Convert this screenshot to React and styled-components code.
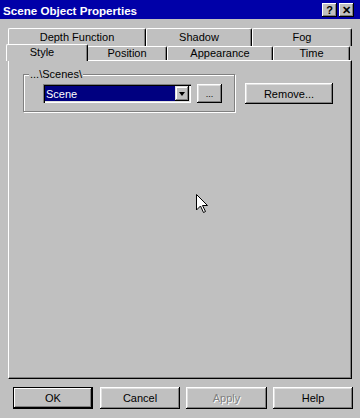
import React from 'react';
import styled, { createGlobalStyle } from 'styled-components';

const GlobalStyle = createGlobalStyle`
  html, body {
    margin: 0;
    padding: 0;
    background: #c0c0c0;
  }
  * {
    box-sizing: border-box;
  }
`;

const Window = styled.div`
  position: relative;
  width: 360px;
  height: 418px;
  background: #c0c0c0;
  font-family: "Liberation Sans", Arial, sans-serif;
  font-size: 11px;
  color: #000;
  display: flex;
  flex-direction: column;
  overflow: hidden;
`;

const TitleBar = styled.div`
  height: 19px;
  background: #0000a8;
  display: flex;
  align-items: center;
  padding: 0 6px 0 3px;
`;

const Title = styled.div`
  flex: 1;
  color: #fff;
  font-weight: bold;
  font-size: 11.6px;
  padding-top: 1px;
`;

const TitleButton = styled.div`
  width: 15px;
  height: 14px;
  margin-left: 2px;
  margin-top: 1px;
  background: #c0c0c0;
  box-shadow: inset -1px -1px #000, inset 1px 1px #fff, inset -2px -2px #808080;
  display: flex;
  align-items: center;
  justify-content: center;
  font-weight: bold;
  font-size: 11px;
  line-height: 1;
`;

const TabArea = styled.div`
  margin: 9px 8px 0 8px;
  display: flex;
  flex-direction: column;
`;

const TabRow = styled.div`
  display: flex;
  height: ${p => p.h}px;
  align-items: flex-end;
`;

const Tab = styled.div`
  position: relative;
  width: ${p => p.w}px;
  height: ${p => p.h}px;
  background: #c0c0c0;
  border-top: 1px solid #fff;
  border-left: 1px solid #fff;
  border-right: 1px solid #000;
  border-top-left-radius: 2px;
  border-top-right-radius: 2px;
  box-shadow: inset -1px 0 #808080;
  display: flex;
  align-items: center;
  justify-content: center;
  padding-bottom: 1px;
`;

const ActiveTab = styled(Tab)`
  width: ${p => p.w + 2}px;
  height: ${p => p.h + 3}px;
  margin-left: -2px;
  margin-right: -1px;
  margin-bottom: -1px;
  z-index: 1;
  padding: 0 10px 2px 0;
`;

const Panel = styled.div`
  position: relative;
  height: 319px;
  margin: 0 8px;
  background: #c0c0c0;
  border-top: 1px solid #fff;
  border-left: 1px solid #fff;
  border-right: 1px solid #000;
  border-bottom: 1px solid #000;
  box-shadow: inset -1px -1px #808080;
  display: flex;
  align-items: flex-start;
  padding: 13px 0 0 14px;
`;

const GroupBox = styled.div`
  position: relative;
  width: 212px;
  height: 38px;
  border: 1px solid #808080;
  box-shadow: inset 1px 1px #fff, 1px 1px #fff;
  display: flex;
  align-items: flex-start;
  padding: 9px 0 0 19px;
`;

const GroupLabel = styled.span`
  position: absolute;
  top: -7px;
  left: 5px;
  padding: 0 1px;
  background: #c0c0c0;
`;

const Combo = styled.div`
  width: 148px;
  height: 19px;
  background: #fff;
  box-shadow: inset 1px 1px #808080, inset 2px 2px #000, inset -1px -1px #fff, inset -2px -2px #dfdfdf;
  display: flex;
  padding: 2px;
`;

const ComboValue = styled.div`
  flex: 1;
  background: #000080;
  color: #fff;
  padding-left: 1px;
  display: flex;
  align-items: center;
`;

const ComboArrow = styled.div`
  width: 14px;
  height: 15px;
  background: #c0c0c0;
  box-shadow: inset -1px -1px #000, inset 1px 1px #dfdfdf, inset -2px -2px #808080, inset 2px 2px #fff;
  display: flex;
  align-items: center;
  justify-content: center;
`;

const Triangle = styled.div`
  width: 0;
  height: 0;
  border-left: 3px solid transparent;
  border-right: 3px solid transparent;
  border-top: 4px solid #000;
`;

const Button = styled.div`
  width: ${p => p.w}px;
  height: ${p => p.h}px;
  margin-left: ${p => p.ml || 0}px;
  margin-top: ${p => p.mt || 0}px;
  background: #c0c0c0;
  box-shadow: ${p => p.isDefault
    ? 'inset 0 0 0 1px #000, inset -2px -2px #000, inset 2px 2px #fff, inset -3px -3px #808080'
    : 'inset -1px -1px #000, inset 1px 1px #fff, inset -2px -2px #808080, inset 2px 2px #dfdfdf'};
  display: flex;
  align-items: center;
  justify-content: center;
  color: ${p => (p.disabled ? '#808080' : '#000')};
  text-shadow: ${p => (p.disabled ? '1px 1px #fff' : 'none')};
  font-size: ${p => p.fs || 11}px;
`;

const ButtonRow = styled.div`
  display: flex;
  margin: 8px 0 0 13px;
`;

const Cursor = styled.svg`
  position: absolute;
  left: 196px;
  top: 194px;
`;

export default function App() {
  return (
    <Window>
      <GlobalStyle />
      <TitleBar>
        <Title>Scene Object Properties</Title>
        <TitleButton>?</TitleButton>
        <TitleButton>✕</TitleButton>
      </TitleBar>

      <TabArea>
        <TabRow h={18}>
          <Tab w={138} h={18}>Depth Function</Tab>
          <Tab w={106} h={18}>Shadow</Tab>
          <Tab w={100} h={18}>Fog</Tab>
        </TabRow>
        <TabRow h={14}>
          <ActiveTab w={80} h={14}>Style</ActiveTab>
          <Tab w={80} h={14}>Position</Tab>
          <Tab w={106} h={14}>Appearance</Tab>
          <Tab w={77} h={14}>Time</Tab>
        </TabRow>
      </TabArea>

      <Panel>
        <GroupBox>
          <GroupLabel>...\Scenes\</GroupLabel>
          <Combo>
            <ComboValue>Scene</ComboValue>
            <ComboArrow><Triangle /></ComboArrow>
          </Combo>
          <Button w={25} h={19} ml={6} fs={9}>...</Button>
        </GroupBox>
        <Button w={88} h={21} ml={10} mt={9}>Remove...</Button>
      </Panel>

      <ButtonRow>
        <Button w={80} h={22} isDefault>OK</Button>
        <Button w={80} h={22} ml={7}>Cancel</Button>
        <Button w={81} h={22} ml={6} disabled>Apply</Button>
        <Button w={80} h={22} ml={6}>Help</Button>
      </ButtonRow>

      <Cursor width="13" height="20" viewBox="0 0 13 20">
        <polygon points="0.5,0.5 0.5,16 4.5,12 7.5,18.5 9.5,17.5 6.5,11.5 11.5,11.5" fill="#fff" stroke="#000" strokeWidth="1" />
      </Cursor>
    </Window>
  );
}
